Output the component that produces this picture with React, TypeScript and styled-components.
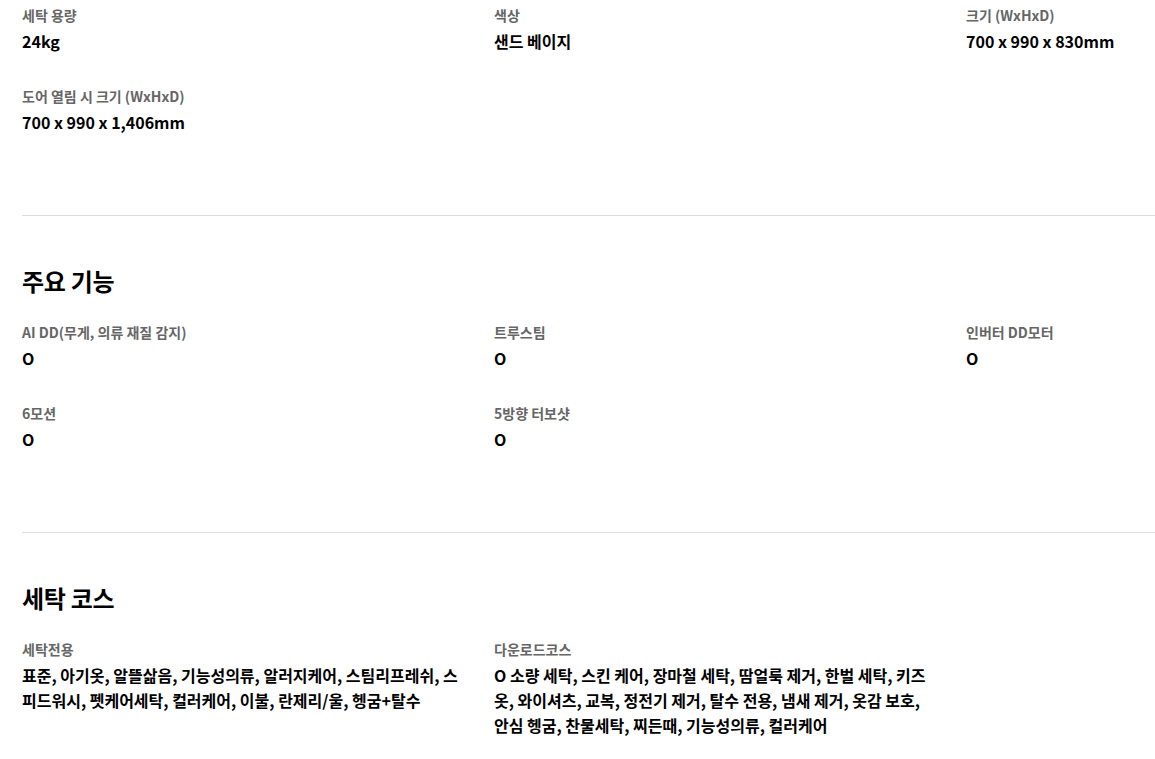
import React from "react";
import styled, { createGlobalStyle } from "styled-components";

const Global = createGlobalStyle`
  html, body { margin: 0; padding: 0; background: #fff; overflow: hidden; }
  body {
    font-family: "Noto Sans CJK KR", "Noto Sans", sans-serif;
    color: #000;
  }
`;

const Page = styled.div`
  padding-left: 22px;
  width: 1416px;
`;

const Section = styled.section<{ $first?: boolean }>`
  padding-top: ${(p) => (p.$first ? "5px" : "48px")};
  padding-bottom: 80px;
  border-bottom: 1px solid #dddddd;
  &:last-child { border-bottom: none; }
`;

const Heading = styled.h2`
  margin: 0 0 24px;
  font-size: 24px;
  line-height: 34px;
  font-weight: 700;
  letter-spacing: -0.3px;
  color: #000;
`;

const Grid = styled.div`
  display: grid;
  grid-template-columns: repeat(3, 440px);
  column-gap: 32px;
  row-gap: 32px;
`;

const Item = styled.div`
  display: flex;
  flex-direction: column;
  gap: 4px;
`;

const Label = styled.div`
  font-size: 14px;
  line-height: 20px;
  font-weight: 700;
  color: #666666;
`;

const Value = styled.div`
  font-size: 16px;
  line-height: 25px;
  font-weight: 700;
  color: #000;
  word-break: break-all;
`;

type Spec = { label: string; value: string };

const specs: Spec[] = [
  { label: "세탁 용량", value: "24kg" },
  { label: "색상", value: "샌드 베이지" },
  { label: "크기 (WxHxD)", value: "700 x 990 x 830mm" },
  { label: "도어 열림 시 크기 (WxHxD)", value: "700 x 990 x 1,406mm" },
];

const features: Spec[] = [
  { label: "AI DD(무게, 의류 재질 감지)", value: "O" },
  { label: "트루스팀", value: "O" },
  { label: "인버터 DD모터", value: "O" },
  { label: "6모션", value: "O" },
  { label: "5방향 터보샷", value: "O" },
];

const courses: Spec[] = [
  {
    label: "세탁전용",
    value:
      "표준, 아기옷, 알뜰삶음, 기능성의류, 알러지케어, 스팀리프레쉬, 스피드워시, 펫케어세탁, 컬러케어, 이불, 란제리/울, 헹굼+탈수",
  },
  {
    label: "다운로드코스",
    value:
      "O 소량 세탁, 스킨 케어, 장마철 세탁, 땀얼룩 제거, 한벌 세탁, 키즈옷, 와이셔츠, 교복, 정전기 제거, 탈수 전용, 냄새 제거, 옷감 보호, 안심 헹굼, 찬물세탁, 찌든때, 기능성의류, 컬러케어",
  },
];

const SpecGrid = ({ items }: { items: Spec[] }) => (
  <Grid>
    {items.map((s) => (
      <Item key={s.label}>
        <Label>{s.label}</Label>
        <Value>{s.value}</Value>
      </Item>
    ))}
  </Grid>
);

export default function App() {
  return (
    <>
      <Global />
      <Page>
        <Section $first>
          <SpecGrid items={specs} />
        </Section>
        <Section>
          <Heading>주요 기능</Heading>
          <SpecGrid items={features} />
        </Section>
        <Section>
          <Heading>세탁 코스</Heading>
          <SpecGrid items={courses} />
        </Section>
      </Page>
    </>
  );
}
